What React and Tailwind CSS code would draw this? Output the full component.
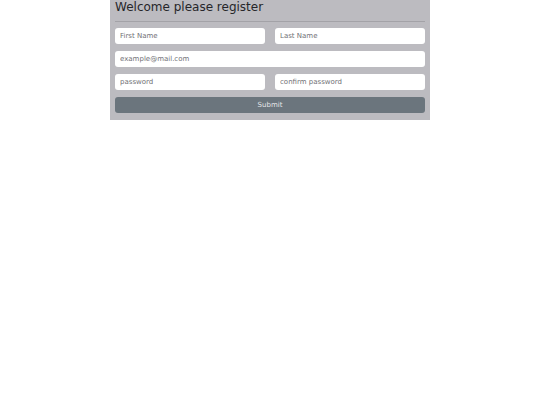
export default function App() {
  const font = { fontFamily: '"DejaVu Sans", sans-serif' };
  const inputCls = "h-[16px] bg-white rounded-[3px] px-[5px] text-[7px] text-[#555] placeholder:text-[#707075] outline-none";
  return (
    <div className="w-[540px] h-[405px] bg-white" style={font}>
      <div className="w-[320px] mx-auto bg-[#bcbbc0] px-[5px] pb-[7px]">
        <div className="h-[22px] flex flex-col">
          <div className="h-[21px] text-[12px] leading-[13px] text-[#26262a] pt-[1px]">
            Welcome please register
          </div>
          <div className="h-px bg-[#a3a2a7]" />
        </div>
        <div className="pt-[6px] flex flex-col gap-[7px]">
          <div className="flex gap-[10px]">
            <input className={"w-[150px] " + inputCls} placeholder="First Name" />
            <input className={"w-[150px] " + inputCls} placeholder="Last Name" />
          </div>
          <input className={"w-[310px] " + inputCls} placeholder="example@mail.com" />
          <div className="flex gap-[10px]">
            <input type="password" className={"w-[150px] " + inputCls} placeholder="password" />
            <input type="password" className={"w-[150px] " + inputCls} placeholder="confirm password" />
          </div>
          <button className="w-[310px] h-[16px] bg-[#6b757d] rounded-[3px] text-[7px] text-[#e4e6e8] leading-none">
            Submit
          </button>
        </div>
      </div>
    </div>
  );
}
